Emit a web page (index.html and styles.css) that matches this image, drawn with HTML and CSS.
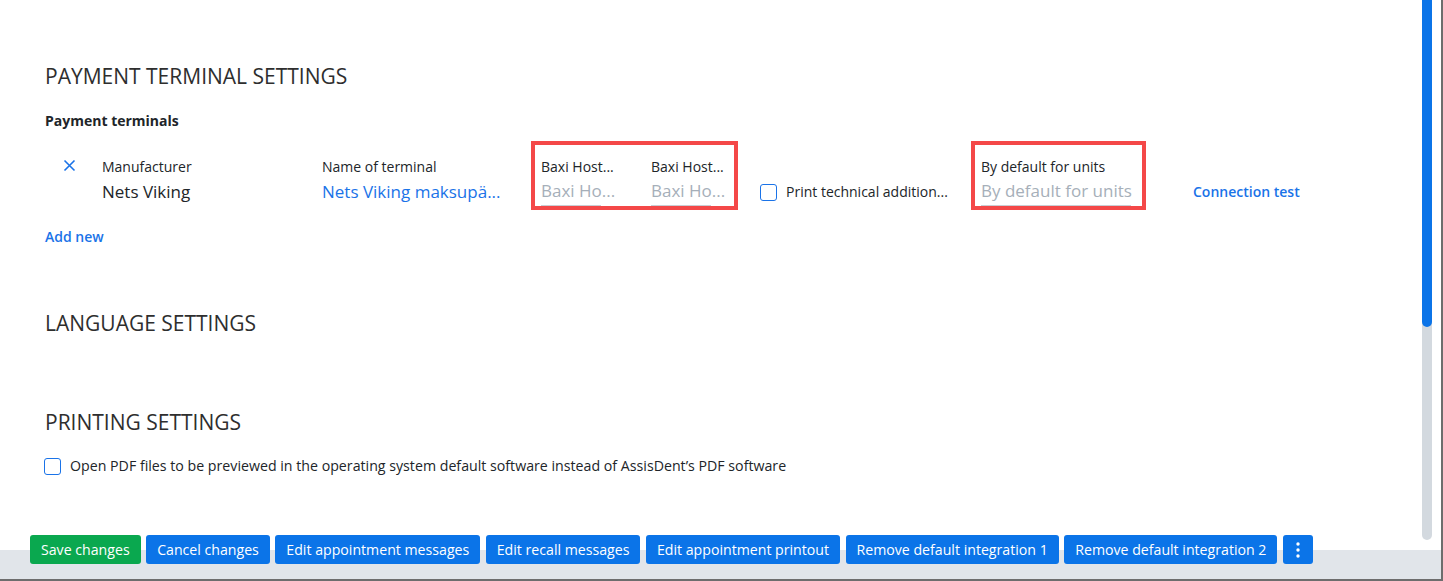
FILE: index.html
```html
<!DOCTYPE html>
<html lang="en">
	<head>
		<title>Settings</title>
		<link rel="stylesheet" href="styles.css">
	</head>
	<body>
		<div class="frame">
			<div class="main">
				<div class="content">
					<h2 class="section-title">PAYMENT TERMINAL SETTINGS</h2>
					<div class="sub-title">Payment terminals</div>

					<div class="terminal-row">
						<div class="remove-col">
							<svg width="13" height="13" viewBox="0 0 13 13"><path d="M1.5 1.5 L11.5 11.5 M11.5 1.5 L1.5 11.5" stroke="#1a73e8" stroke-width="1.6" fill="none"/></svg>
						</div>
						<div class="field manufacturer">
							<div class="field-label">Manufacturer</div>
							<div class="field-value">Nets Viking</div>
						</div>
						<div class="field terminal-name">
							<div class="field-label">Name of terminal</div>
							<div class="field-value link">Nets Viking maksupä...</div>
						</div>
						<div class="highlight host-box">
							<div class="field host">
								<div class="field-label">Baxi Host...</div>
								<div class="line-input">Baxi Ho...</div>
							</div>
							<div class="field host last">
								<div class="field-label">Baxi Host...</div>
								<div class="line-input">Baxi Ho...</div>
							</div>
						</div>
						<label class="check print-check">
							<span class="box"></span>
							<span class="check-text">Print technical addition...</span>
						</label>
						<div class="highlight units-box">
							<div class="field units">
								<div class="field-label">By default for units</div>
								<div class="line-input wide">By default for units</div>
							</div>
						</div>
						<a class="action-link connection">Connection test</a>
					</div>

					<a class="action-link add-new">Add new</a>

					<h2 class="section-title language">LANGUAGE SETTINGS</h2>

					<h2 class="section-title printing">PRINTING SETTINGS</h2>
					<label class="check pdf-check">
						<span class="box"></span>
						<span class="check-text">Open PDF files to be previewed in the operating system default software instead of AssisDent’s PDF software</span>
					</label>
				</div>
				<div class="scroll-track"><div class="scroll-thumb"></div></div>
			</div>
			<div class="footer">
				<button class="btn green">Save changes</button>
				<button class="btn">Cancel changes</button>
				<button class="btn">Edit appointment messages</button>
				<button class="btn">Edit recall messages</button>
				<button class="btn">Edit appointment printout</button>
				<button class="btn">Remove default integration 1</button>
				<button class="btn">Remove default integration 2</button>
				<button class="btn more">
					<svg width="4" height="16" viewBox="0 0 4 16"><circle cx="2" cy="2" r="1.7" fill="#fff"/><circle cx="2" cy="8" r="1.7" fill="#fff"/><circle cx="2" cy="14" r="1.7" fill="#fff"/></svg>
				</button>
			</div>
		</div>
	</body>
</html>
```

FILE: styles.css
```css
body {
	margin: 0;
	font-family: "Open Sans", Arial, sans-serif;
	color: #212529;
	background: #fff;
}
.frame {
	width: 1441px;
	height: 579px;
	border-right: 2px solid #6d6d6d;
	border-bottom: 2px solid #6d6d6d;
	display: flex;
	flex-direction: column;
	overflow: hidden;
}
.main {
	flex: 1;
	display: flex;
	min-height: 0;
}
.content {
	flex: 1;
	padding: 62px 0 0 45px;
}
.scroll-track {
	width: 10px;
	height: 540px;
	margin-right: 9px;
	background: #d3d9df;
	border-radius: 0 0 5px 5px;
}
.scroll-thumb {
	height: 327px;
	background: #0b74e8;
	border-radius: 0 0 5px 5px;
}
.section-title {
	margin: 0;
	font-size: 21px;
	font-weight: 400;
	line-height: 28px;
	color: #2e2e2e;
}
.sub-title {
	margin-top: 21px;
	font-size: 14px;
	font-weight: 700;
	line-height: 20px;
}
.terminal-row {
	display: flex;
	align-items: flex-start;
	margin-top: 10px;
	height: 69px;
}
.remove-col {
	width: 57px;
	flex-shrink: 0;
	padding: 14px 0 0 18px;
	box-sizing: border-box;
}
.field {
	padding-top: 16px;
	flex-shrink: 0;
}
.field-label {
	font-size: 14px;
	line-height: 20px;
	white-space: nowrap;
}
.field-value {
	font-size: 17px;
	line-height: 26px;
	margin-top: 2px;
	white-space: nowrap;
}
.field-value.link {
	color: #1a73e8;
}
.manufacturer {
	width: 220px;
}
.terminal-name {
	width: 182px;
	margin-right: 27px;
}
.highlight {
	border: 4px solid #f44848;
	padding: 0 0 0 6px;
	height: 61px;
	display: flex;
	flex-shrink: 0;
}
.highlight .field {
	padding-top: 12px;
}
.host-box {
	width: 193px;
}
.units-box {
	width: 161px;
}
.host {
	width: 110px;
}
.host.last {
	width: 83px;
}
.line-input {
	position: relative;
	width: 60px;
	margin-top: 2px;
	font-size: 17px;
	line-height: 24px;
	height: 27px;
	white-space: nowrap;
	color: #a6afb9;
}
.line-input::after {
	content: "";
	position: absolute;
	left: 0;
	bottom: 0;
	width: 100%;
	height: 1px;
	background: #c9ced4;
}
.line-input.wide {
	width: 150px;
}
.check {
	display: flex;
	align-items: center;
	font-size: 14px;
	line-height: 20px;
	flex-shrink: 0;
}
.box {
	width: 15px;
	height: 15px;
	border: 1px solid #1a73e8;
	border-radius: 3px;
	box-sizing: content-box;
}
.check-text {
	margin-left: 9px;
	white-space: nowrap;
}
.print-check {
	margin: 41px 22px 0 22px;
	width: 189px;
}
.action-link {
	color: #1a73e8;
	font-size: 14px;
	font-weight: 600;
	line-height: 20px;
	cursor: pointer;
}
.connection {
	margin: 41px 0 0 47px;
}
.add-new {
	display: block;
	margin-top: 17px;
}
.language {
	margin-top: 62px;
}
.printing {
	margin-top: 71px;
}
.pdf-check {
	margin-top: 20px;
	margin-left: -1px;
	font-size: 14.2px;
}
.footer {
	height: 29px;
	background: #e1e5ea;
	display: flex;
	gap: 5.5px;
	padding-left: 30px;
}
.btn {
	margin-top: -15px;
	height: 29px;
	padding: 0 11px;
	border: none;
	border-radius: 3px;
	background: #0b74e8;
	color: #fff;
	font-family: inherit;
	font-size: 14.15px;
	white-space: nowrap;
}
.btn.green {
	background: #0aa84f;
}
.btn.more {
	width: 30px;
	padding: 0;
	display: flex;
	align-items: center;
	justify-content: center;
}
```
